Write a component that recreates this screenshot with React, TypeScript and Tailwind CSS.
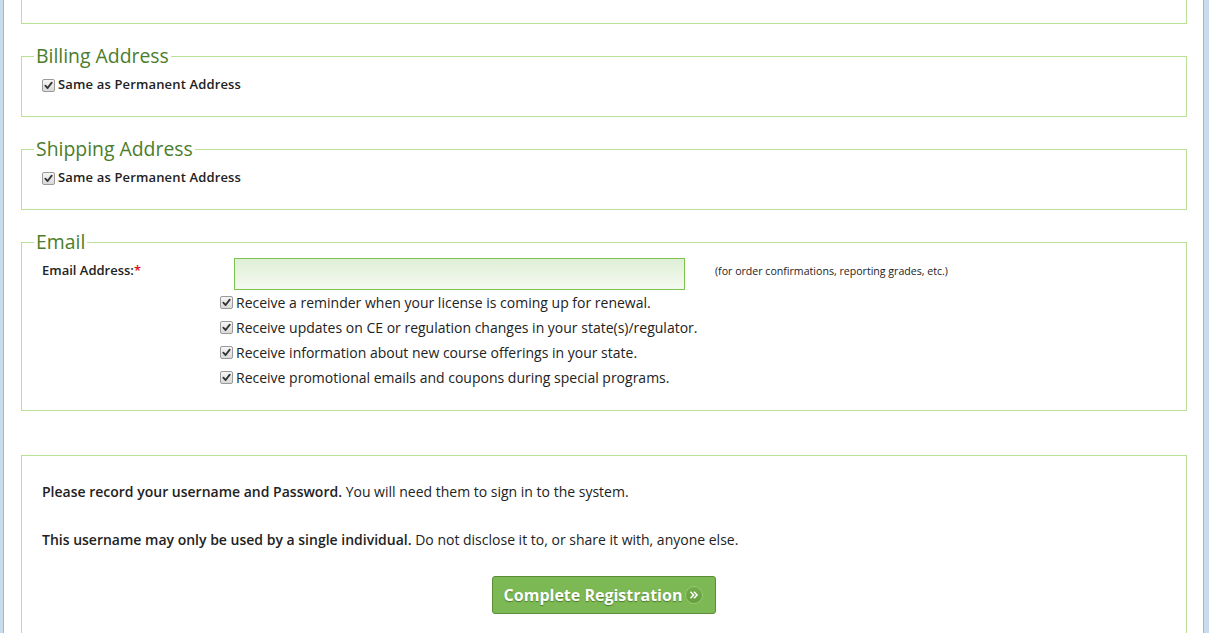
import React from 'react';

const font = { fontFamily: '"Open Sans", "Noto Sans", sans-serif' };

// little grey checked box, like the old native one
const Check: React.FC = () => (
  <span className="inline-flex h-[13px] w-[13px] shrink-0 items-center justify-center rounded-[2px] border border-[#9a9a9a] bg-gradient-to-b from-[#f6f6f6] to-[#d9d9d9]">
    <svg width="9" height="9" viewBox="0 0 10 10">
      <path d="M1.5 5.2 L4 7.8 L8.6 1.8" fill="none" stroke="#333" strokeWidth="2" strokeLinecap="round" strokeLinejoin="round" />
    </svg>
  </span>
);

const Section: React.FC<{ title: string; children: React.ReactNode; className?: string }> = ({
  title,
  children,
  className,
}) => (
  <fieldset className={`border border-[#b9e095] ${className ?? ''}`}>
    <legend className="ml-[12px] px-[2px] text-[19.4px] leading-[20px] text-[#4b7d2a]">{title}</legend>
    {children}
  </fieldset>
);

const SameAs: React.FC = () => (
  <div className="flex h-[18px] items-center gap-[3px] px-[20px] text-[13px] font-semibold tracking-[0.15px] text-[#222]">
    <Check />
    <span>Same as Permanent Address</span>
  </div>
);

const options = [
  'Receive a reminder when your license is coming up for renewal.',
  'Receive updates on CE or regulation changes in your state(s)/regulator.',
  'Receive information about new course offerings in your state.',
  'Receive promotional emails and coupons during special programs.',
];

export default function App() {
  return (
    <div className="flex min-h-[633px] bg-white" style={font}>
      {/* left window edge */}
      <div className="w-[4px] shrink-0 border-r border-[#aab4be] bg-[#c9dcee]" />

      <div className="flex-1 pl-[17px] pr-[16px]">
        {/* tail of previous fieldset */}
        <div className="h-[24px] border-x border-b border-[#b9e095]" />

        <Section title="Billing Address" className="mt-[22px]">
          <div className="pt-[10px] pb-[22px]">
            <SameAs />
          </div>
        </Section>

        <Section title="Shipping Address" className="mt-[22px]">
          <div className="pt-[10px] pb-[22px]">
            <SameAs />
          </div>
        </Section>

        <Section title="Email" className="mt-[22px]">
          <div className="px-[20px] pt-[6px] pb-[20px]">
            <div className="flex items-start">
              <label className="w-[192px] pt-[3px] text-[13px] font-semibold text-[#222]">
                Email Address:<span className="text-[#e0101b]">*</span>
              </label>
              <div className="h-[32px] w-[451px] border border-[#7dc24b] bg-gradient-to-b from-[#dfefd6] to-[#f4f9f0]" />
              <span className="ml-[30px] pt-[6px] text-[10.6px] text-[#222]">
                (for order confirmations, reporting grades, etc.)
              </span>
            </div>
            <div className="pl-[178px]">
              {options.map((o) => (
                <div key={o} className="flex h-[25px] items-center gap-[3px] text-[14px] text-[#222]">
                  <Check />
                  <span>{o}</span>
                </div>
              ))}
            </div>
          </div>
        </Section>

        <div className="mt-[44px] border border-[#b9e095] px-[20px] pt-[26px] pb-[40px] text-[14px] leading-[20px] text-[#222]">
          <p>
            <span className="font-semibold">Please record your username and Password.</span> You will need them to
            sign in to the system.
          </p>
          <p className="mt-[28px]">
            <span className="font-semibold">This username may only be used by a single individual.</span> Do not
            disclose it to, or share it with, anyone else.
          </p>
          <div className="mt-[26px] flex justify-center">
            <button className="flex h-[38px] items-center gap-[3px] rounded-[3px] border border-[#5b8c37] bg-[#7cb853] pl-[11px] pr-[12px] text-[16px] font-bold text-white [text-shadow:0_1px_1px_#4d7a2c]">
              Complete Registration
              <span className="flex h-[18px] w-[18px] items-center justify-center rounded-full border border-[#96c872] bg-gradient-to-b from-[#73ad4b] to-[#659e3e]">
                <svg width="10" height="10" viewBox="0 0 10 10">
                  <path d="M1.5 1.8 L4.6 5 L1.5 8.2 M5 1.8 L8.1 5 L5 8.2" fill="none" stroke="#fff" strokeWidth="1.5" />
                </svg>
              </span>
            </button>
          </div>
        </div>
      </div>

      {/* right window edge */}
      <div className="w-[6px] shrink-0 border-l border-[#aab4be] bg-[#c9dcee]" />
    </div>
  );
}
